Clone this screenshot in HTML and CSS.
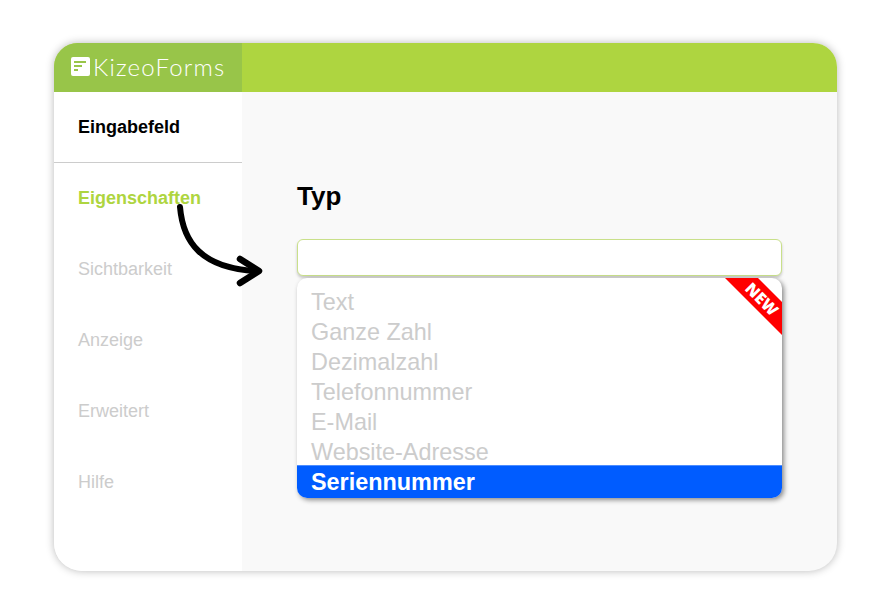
FILE: index.html
```html
<!DOCTYPE html>
<html>
<head>
    <title>Kizeo Forms</title>
    <meta name="viewport" content="width=device-width, initial-scale=1.0">
    <link rel="stylesheet" href="styles.css">
</head>
<body>
    <div class="card">
        <div class="topbar">
            <div class="logo">
                <svg class="logo-icon" width="19" height="19" viewBox="0 0 19 19">
                    <path fill="#fff" fill-rule="evenodd" d="M2 0H17A2 2 0 0 1 19 2V17A2 2 0 0 1 17 19H2A2 2 0 0 1 0 17V2A2 2 0 0 1 2 0ZM3 4V6H15V4ZM3 8V10H11V8ZM3 12V14H7V12Z"/>
                </svg>
                <span class="logo-text">KizeoForms</span>
            </div>
        </div>
        <div class="main">
            <div class="sidebar">
                <div class="side-head">Eingabefeld</div>
                <div class="side-item active">Eigenschaften</div>
                <div class="side-item">Sichtbarkeit</div>
                <div class="side-item">Anzeige</div>
                <div class="side-item">Erweitert</div>
                <div class="side-item">Hilfe</div>
            </div>
            <div class="content">
                <h2>Typ</h2>
                <div class="type-input"></div>
                <div class="dropdown">
                    <div class="option">Text</div>
                    <div class="option">Ganze Zahl</div>
                    <div class="option">Dezimalzahl</div>
                    <div class="option">Telefonnummer</div>
                    <div class="option">E-Mail</div>
                    <div class="option">Website-Adresse</div>
                    <div class="option selected">Seriennummer</div>
                    <div class="ribbon">
                        <svg width="57" height="57" viewBox="0 0 57 57"><polygon points="0,0 33,0 57,24 57,57" fill="#ff0000"/></svg>
                        <span>NEW</span>
                    </div>
                </div>
            </div>
        </div>
        <svg class="arrow" width="100" height="90" viewBox="0 0 100 90">
            <path d="M5 3C8 38 26 64 81 67" fill="none" stroke="#000" stroke-width="6" stroke-linecap="round"/>
            <path d="M65 55L84 67L65 79" fill="none" stroke="#000" stroke-width="6.5" stroke-linecap="round" stroke-linejoin="round"/>
        </svg>
    </div>
</body>
</html>
```
FILE: styles.css
```css
* {
    margin: 0;
    padding: 0;
    box-sizing: border-box;
    font-family: "Liberation Sans", Arial, sans-serif;
}

body {
    background: #fff;
    padding: 43px 54px;
}

.card {
    position: relative;
    width: 783px;
    height: 528px;
    border-radius: 24px 24px 28px 28px;
    background: #f9f9f9;
    box-shadow: 0 0 8px rgba(0, 0, 0, 0.28);
    overflow: hidden;
    display: flex;
    flex-direction: column;
}

.topbar {
    height: 49px;
    background: #aed540;
    flex-shrink: 0;
}

.logo {
    width: 188px;
    height: 100%;
    background: #98c549;
    display: flex;
    align-items: center;
    padding: 0 0 2px 17px;
    gap: 3px;
}

.logo-text {
    color: #fff;
    font-family: "Lato", sans-serif;
    font-weight: 300;
    font-size: 24px;
    letter-spacing: 1.2px;
}

.main {
    flex: 1;
    display: flex;
}

.sidebar {
    width: 188px;
    background: #fff;
}

.side-head {
    height: 71px;
    padding-left: 24px;
    display: flex;
    align-items: center;
    font-size: 18px;
    font-weight: bold;
    color: #000;
    border-bottom: 1px solid #ccc;
}

.side-item {
    height: 71px;
    padding-left: 24px;
    display: flex;
    align-items: center;
    font-size: 18px;
    color: #ccc;
}

.side-item.active {
    color: #aed540;
    font-weight: bold;
}

.content {
    flex: 1;
    padding: 90px 55px 0;
}

h2 {
    font-size: 26px;
    line-height: 28px;
    color: #000;
    margin-bottom: 29px;
}

.type-input {
    height: 37px;
    background: #fff;
    border: 1px solid #c9e08a;
    border-radius: 6px;
    box-shadow: 0 2px 3px rgba(0, 0, 0, 0.2);
    margin-bottom: 2px;
}

.dropdown {
    position: relative;
    height: 220px;
    padding-top: 9px;
    background: #fff;
    border-radius: 10px;
    box-shadow: 2px 2px 5px rgba(0, 0, 0, 0.45);
    overflow: hidden;
}

.option {
    height: 30px;
    line-height: 30px;
    padding-left: 14px;
    font-size: 23.4px;
    color: #ccc;
}

.option.selected {
    height: 34px;
    line-height: 33px;
    margin-top: -2px;
    background: #005cff;
    border-top: 1px solid #4d8dff;
    color: #fff;
    font-weight: bold;
}

.ribbon {
    position: absolute;
    top: 0;
    right: 0;
    width: 57px;
    height: 57px;
}

.ribbon span {
    position: absolute;
    left: 36.7px;
    top: 21px;
    color: #fff;
    font-family: "Open Sans", sans-serif;
    font-size: 16px;
    line-height: 16px;
    font-weight: 800;
    transform: translate(-50%, -50%) rotate(45deg);
}

.arrow {
    position: absolute;
    left: 121px;
    top: 161px;
}
```
